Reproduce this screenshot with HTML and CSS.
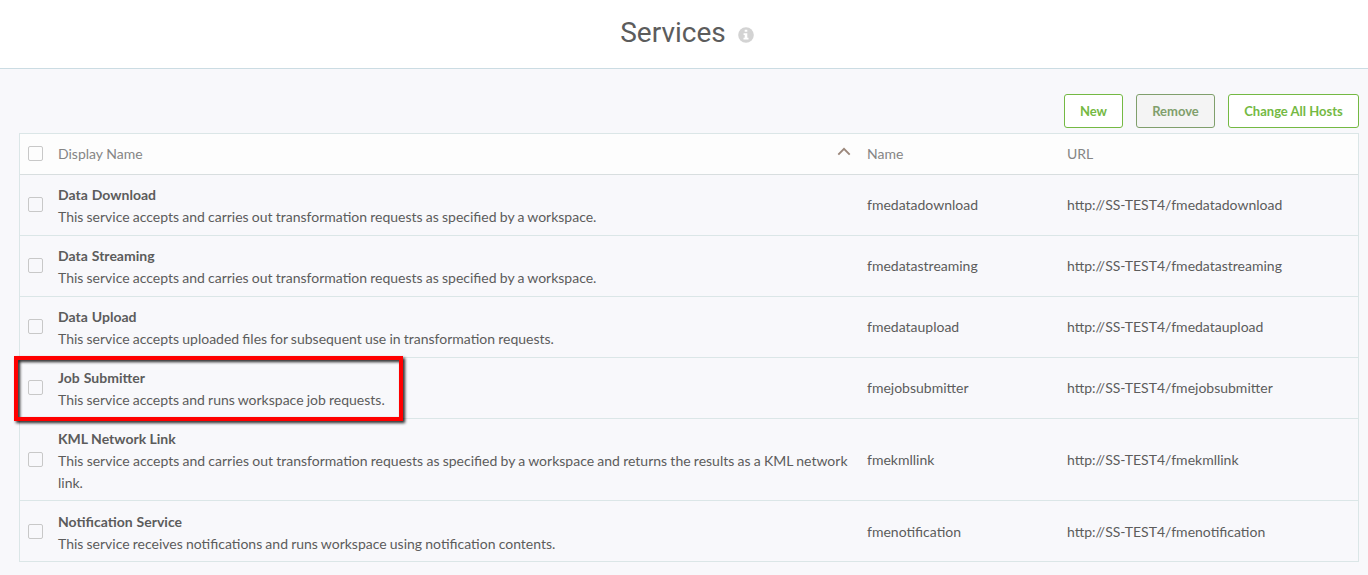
FILE: index.html
```html
<!DOCTYPE html>
<html lang="en">
<head>
<meta charset="utf-8">
<title>Services</title>
<link rel="stylesheet" href="styles.css">
</head>
<body>
<header class="page-header">
  <h1>Services</h1>
  <svg class="info" viewBox="0 0 16 16"><circle cx="8" cy="8" r="7.8" fill="#d3d3d3"/><path d="M6.7 2.7h2.6v2.1H6.7zM5.6 6.3h3.7v4.5h1.2v1.6h-5v-1.6h1.2V7.9H5.6z" fill="#fff"/></svg>
</header>
<main>
  <div class="toolbar">
    <button class="btn new">New</button>
    <button class="btn remove">Remove</button>
    <button class="btn hosts">Change All Hosts</button>
  </div>
  <div class="table">
    <div class="row head">
      <span class="check"></span>
      <div class="sortable">Display Name<svg class="sort" viewBox="0 0 14 9"><path d="M1.3 7.6 7 1.8l5.7 5.8" fill="none" stroke="#9b877b" stroke-width="1.9"/></svg></div>
      <div>Name</div>
      <div>URL</div>
    </div>
    <div class="row">
      <span class="check"></span>
      <div class="desc"><strong>Data Download</strong><p>This service accepts and carries out transformation requests as specified by a workspace.</p></div>
      <div>fmedatadownload</div>
      <div>http://SS-TEST4/fmedatadownload</div>
    </div>
    <div class="row">
      <span class="check"></span>
      <div class="desc"><strong>Data Streaming</strong><p>This service accepts and carries out transformation requests as specified by a workspace.</p></div>
      <div>fmedatastreaming</div>
      <div>http://SS-TEST4/fmedatastreaming</div>
    </div>
    <div class="row">
      <span class="check"></span>
      <div class="desc"><strong>Data Upload</strong><p>This service accepts uploaded files for subsequent use in transformation requests.</p></div>
      <div>fmedataupload</div>
      <div>http://SS-TEST4/fmedataupload</div>
    </div>
    <div class="row marked">
      <span class="check"></span>
      <div class="desc"><strong>Job Submitter</strong><p>This service accepts and runs workspace job requests.</p></div>
      <div>fmejobsubmitter</div>
      <div>http://SS-TEST4/fmejobsubmitter</div>
      <span class="highlight"></span>
    </div>
    <div class="row tall">
      <span class="check"></span>
      <div class="desc"><strong>KML Network Link</strong><p>This service accepts and carries out transformation requests as specified by a workspace and returns the results as a KML network link.</p></div>
      <div>fmekmllink</div>
      <div>http://SS-TEST4/fmekmllink</div>
    </div>
    <div class="row last">
      <span class="check"></span>
      <div class="desc"><strong>Notification Service</strong><p>This service receives notifications and runs workspace using notification contents.</p></div>
      <div>fmenotification</div>
      <div>http://SS-TEST4/fmenotification</div>
    </div>
  </div>
</main>
</body>
</html>
```
FILE: styles.css
```css
* { box-sizing: border-box; }
body {
  margin: 0;
  background: #f8f8fb;
  color: #5c5c5c;
  font: 14px/22px Lato, sans-serif;
}
.page-header {
  height: 69px;
  padding: 0 0 2px 6px;
  display: flex;
  align-items: center;
  justify-content: center;
  gap: 12px;
  background: #fff;
  border-bottom: 1px solid #cbdce3;
}
h1 {
  margin: 0;
  font: 400 28px/36px Roboto, sans-serif;
  color: #5c5c5c;
}
.info { width: 16px; height: 16px; margin-top: 4px; }
main { padding: 25px 9px 0 19px; }
.toolbar {
  display: flex;
  justify-content: flex-end;
  gap: 13px;
  margin-bottom: 5px;
}
.btn {
  height: 34px;
  padding: 0;
  border: 1px solid #74b943;
  border-radius: 3px;
  background: #fff;
  color: #74b943;
  font: 700 13px/20px Lato, sans-serif;
}
.new { width: 59px; }
.remove { width: 79px; background: #f4f4f4; border-color: #809f6c; color: #809f6c; }
.hosts { width: 131px; }
.table { border: 1px solid #dbe6e7; border-bottom: 0; }
.row {
  height: 61px;
  display: grid;
  grid-template-columns: 38px 809px 200px 1fr;
  align-items: center;
  border-bottom: 1px solid #dbe6e7;
}
.head {
  height: 41px;
  background: #fdfdfd;
  border-color: #d8dedf;
  color: #858585;
}
.tall { height: 82px; }
.check {
  width: 15px;
  height: 15px;
  margin: 0 0 2px 8px;
  border: 1px solid #c8c8c8;
  border-radius: 2px;
}
.tall .check, .last .check { margin-bottom: 0; }
.sortable {
  display: flex;
  align-items: center;
  justify-content: space-between;
  padding-right: 16px;
}
.sort { width: 14px; height: 9px; margin-top: -5px; }
.desc { padding: 2px 16px 0 0; word-spacing: -.42px; }
.desc strong { display: block; word-spacing: .6px; }
.tall .desc { word-spacing: -.34px; }
.tall .desc strong { word-spacing: 0; }
.desc p { margin: 0; }
.last { padding-top: 1px; }
.marked { position: relative; }
.highlight {
  position: absolute;
  left: -6px;
  top: -2px;
  width: 389px;
  height: 65px;
  border: 4px solid #f00;
  filter: drop-shadow(2px 2px 1.5px rgba(0, 0, 0, .85));
}
```
